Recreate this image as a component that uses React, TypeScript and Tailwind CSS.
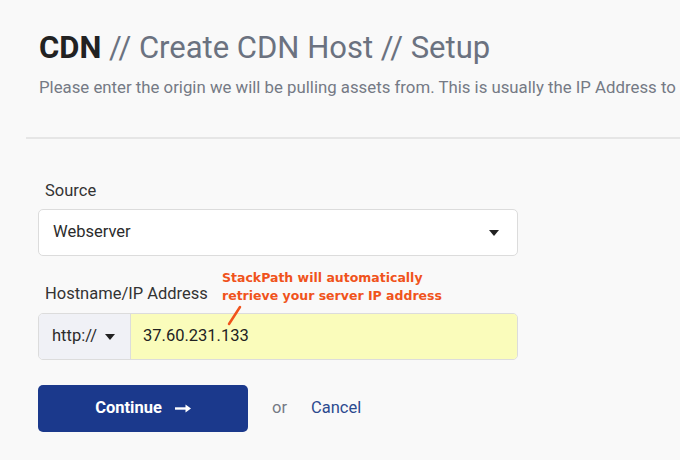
const roboto = { fontFamily: 'Roboto, "Liberation Sans", sans-serif' };

function Caret() {
  return (
    <svg width="10" height="6" viewBox="0 0 10 6">
      <path d="M0 0 L10 0 L5 6 Z" fill="#222" />
    </svg>
  );
}

function LongArrow() {
  return (
    <svg width="16" height="9" viewBox="0 0 16 9">
      <path d="M0 4.5 H12" stroke="white" strokeWidth="2.4" />
      <path d="M10.5 0.5 L16 4.5 L10.5 8.5 Z" fill="white" />
    </svg>
  );
}

export default function App() {
  return (
    <div className="w-[680px] h-[460px] overflow-hidden bg-[#f9f9f9] text-[#333]" style={roboto}>
      <div className="pl-[39px] pt-[29px]">
        <h1 className="text-[31px] leading-[38px] text-[#6b7280] whitespace-nowrap">
          <span className="font-bold text-[#222]">CDN</span> // Create CDN Host // Setup
        </h1>
        <p className="mt-[10px] text-[16.8px] leading-[20px] text-[#757a85] whitespace-nowrap">
          Please enter the origin we will be pulling assets from. This is usually the IP Address to
        </p>
      </div>

      <div className="ml-[26px] mt-[40px] border-t-2 border-[#e6e6e6]" />

      <div className="pl-[38px] pt-[42px] w-[518px]">
        <label className="block pl-[7px] text-[16.5px] leading-[20px] text-[#333]">Source</label>
        <div className="mt-[8px] h-[47px] flex items-center justify-between bg-white border border-[#dcdcdc] rounded-[5px] pl-[14px] pr-[18px]">
          <span className="text-[16.5px] text-[#2b2b2b]">Webserver</span>
          <Caret />
        </div>

        <div className="relative mt-[28px]">
          <label className="block pl-[7px] text-[16.5px] leading-[20px] text-[#333]">Hostname/IP Address</label>
          <div
            className="absolute left-[184px] top-[-15px] text-[12.5px] leading-[18px] font-bold text-[#f0531c] whitespace-nowrap"
            style={{ fontFamily: '"DejaVu Sans", Verdana, sans-serif' }}
          >
            <div>StackPath will automatically</div>
            <div>retrieve your server IP address</div>
          </div>
          <svg className="absolute left-[187px] top-[21px]" width="20" height="24" viewBox="0 0 20 24">
            <path d="M15 2 L4 19" stroke="#f0531c" strokeWidth="2.5" strokeLinecap="round" />
          </svg>
        </div>

        <div className="mt-[9px] h-[47px] flex border border-[#dcdcdc] rounded-[5px] overflow-hidden">
          <div className="w-[92px] flex items-center gap-[8px] pl-[13px] bg-[#f0f1f6] border-r border-[#dcdcdc]">
            <span className="text-[16.5px] text-[#2b2b2b]">http://</span>
            <Caret />
          </div>
          <div className="flex-1 flex items-center pl-[12px] bg-[#fafcbb]">
            <span className="text-[16.5px] text-[#222]">37.60.231.133</span>
          </div>
        </div>

        <div className="mt-[25px] flex items-center">
          <button className="w-[210px] h-[47px] rounded-[5px] bg-[#1b398c] text-white flex items-center justify-center gap-[13px] font-bold text-[16.5px]">
            Continue
            <LongArrow />
          </button>
          <span className="ml-[24px] text-[16.5px] text-[#757a85]">or</span>
          <span className="ml-[24px] text-[16.5px] text-[#2c4a8f]">Cancel</span>
        </div>
      </div>
    </div>
  );
}
